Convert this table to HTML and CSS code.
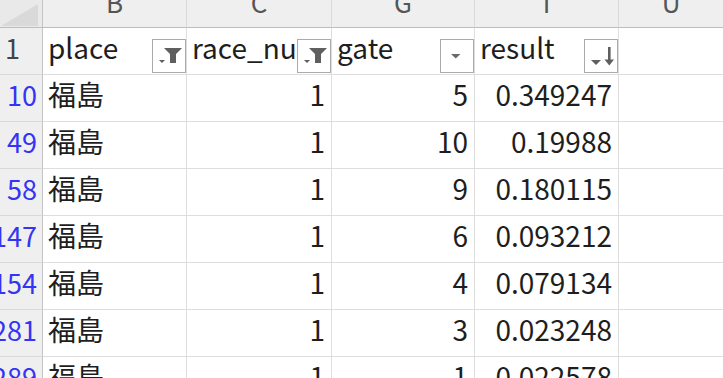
FILE: index.html
```html
<!DOCTYPE html>
<html lang="ja">
<head>
<meta charset="utf-8">
<title>Sheet</title>
<link rel="stylesheet" href="styles.css">
</head>
<body>
<div class="sheet">
  <div class="corner"><svg class="corner-tri" width="40" height="24" viewBox="0 0 40 24"><polygon points="1,23 38,1 38,23" fill="#d9d9d9"/></svg></div>
  <div class="colhead"><span>B</span></div>
  <div class="colhead"><span>C</span></div>
  <div class="colhead"><span>G</span></div>
  <div class="colhead"><span>I</span></div>
  <div class="colhead colhead-last"><span>U</span></div>

  <div class="rowhead rowhead-plain"><span>1</span></div>
  <div class="cell head"><span class="txt">place</span>
    <span class="fbtn"><svg width="32" height="32" viewBox="0 0 32 32"><polygon points="11,8 29,8 23,14 23,23 17,23 17,14" fill="#5f5f5f"/><polygon points="6,20 12,20 9,23" fill="#5f5f5f"/></svg></span></div>
  <div class="cell head"><span class="txt">race_num</span>
    <span class="fbtn"><svg width="32" height="32" viewBox="0 0 32 32"><polygon points="11,8 29,8 23,14 23,23 17,23 17,14" fill="#5f5f5f"/><polygon points="6,20 12,20 9,23" fill="#5f5f5f"/></svg></span></div>
  <div class="cell head"><span class="txt">gate</span>
    <span class="fbtn"><svg width="32" height="32" viewBox="0 0 32 32"><polygon points="10,14 19.5,14 14.75,18.5" fill="#6a6a6a"/></svg></span></div>
  <div class="cell head"><span class="txt">result</span>
    <span class="fbtn"><svg width="32" height="32" viewBox="0 0 32 32"><polygon points="6,20 16,20 11,25" fill="#5f5f5f"/><rect x="23" y="7" width="2.6" height="15" fill="#5f5f5f"/><polygon points="19.5,19.5 29,19.5 24.3,25.5" fill="#5f5f5f"/></svg></span></div>
  <div class="cell last"></div>

  <div class="rowhead"><span>10</span></div>
  <div class="cell"><span class="txt">福島</span></div>
  <div class="cell num"><span class="txt">1</span></div>
  <div class="cell num"><span class="txt">5</span></div>
  <div class="cell num"><span class="txt">0.349247</span></div>
  <div class="cell last"></div>

  <div class="rowhead"><span>49</span></div>
  <div class="cell"><span class="txt">福島</span></div>
  <div class="cell num"><span class="txt">1</span></div>
  <div class="cell num"><span class="txt">10</span></div>
  <div class="cell num"><span class="txt">0.19988</span></div>
  <div class="cell last"></div>

  <div class="rowhead"><span>58</span></div>
  <div class="cell"><span class="txt">福島</span></div>
  <div class="cell num"><span class="txt">1</span></div>
  <div class="cell num"><span class="txt">9</span></div>
  <div class="cell num"><span class="txt">0.180115</span></div>
  <div class="cell last"></div>

  <div class="rowhead"><span>147</span></div>
  <div class="cell"><span class="txt">福島</span></div>
  <div class="cell num"><span class="txt">1</span></div>
  <div class="cell num"><span class="txt">6</span></div>
  <div class="cell num"><span class="txt">0.093212</span></div>
  <div class="cell last"></div>

  <div class="rowhead"><span>154</span></div>
  <div class="cell"><span class="txt">福島</span></div>
  <div class="cell num"><span class="txt">1</span></div>
  <div class="cell num"><span class="txt">4</span></div>
  <div class="cell num"><span class="txt">0.079134</span></div>
  <div class="cell last"></div>

  <div class="rowhead"><span>281</span></div>
  <div class="cell"><span class="txt">福島</span></div>
  <div class="cell num"><span class="txt">1</span></div>
  <div class="cell num"><span class="txt">3</span></div>
  <div class="cell num"><span class="txt">0.023248</span></div>
  <div class="cell last"></div>

  <div class="rowhead"><span>289</span></div>
  <div class="cell"><span class="txt">福島</span></div>
  <div class="cell num"><span class="txt">1</span></div>
  <div class="cell num"><span class="txt">1</span></div>
  <div class="cell num"><span class="txt">0.022578</span></div>
  <div class="cell last"></div>
</div>
</body>
</html>
```
FILE: styles.css
```css
html, body {
  margin: 0;
  padding: 0;
  background: #ffffff;
  overflow: hidden;
}
body {
  width: 723px;
  height: 378px;
  font-family: "Noto Sans CJK JP", "Noto Sans", sans-serif;
}
.sheet {
  display: grid;
  grid-template-columns: 43px 144px 145px 143px 144px 1fr;
  grid-template-rows: 28px 47px repeat(7, 47px);
  width: 723px;
}
.corner {
  background: #e9e9e9;
  border-right: 1px solid #c4c4c4;
  border-bottom: 1px solid #bdbdbd;
  box-sizing: border-box;
  display: flex;
  align-items: flex-end;
  justify-content: flex-end;
  overflow: hidden;
}
.corner-tri {
  display: block;
  margin-right: 2px;
}
.colhead {
  background: #efefef;
  border-right: 1px solid #d9d9d9;
  border-bottom: 1px solid #bdbdbd;
  box-sizing: border-box;
  overflow: hidden;
  text-align: center;
  color: #555555;
  font-size: 26px;
  line-height: 26px;
}
.colhead span {
  display: block;
  margin-top: -11px;
}
.colhead-last {
  border-right: none;
}
.rowhead {
  background: #efefef;
  border-right: 1px solid #c4c4c4;
  border-bottom: 1px solid #d9d9d9;
  box-sizing: border-box;
  display: flex;
  align-items: flex-end;
  justify-content: flex-end;
  padding: 0 5px 13px 0;
  color: #3434f4;
  font-size: 27px;
  line-height: 26px;
  white-space: nowrap;
}
.rowhead-plain {
  color: #444444;
  padding-right: 22px;
}
.cell {
  position: relative;
  border-right: 1px solid #dedede;
  border-bottom: 1px solid #dedede;
  box-sizing: border-box;
  display: flex;
  align-items: flex-end;
  padding: 0 6px 13px 5px;
  color: #1e1e1e;
  font-size: 28px;
  line-height: 27px;
  white-space: nowrap;
  overflow: hidden;
}
.cell.num {
  justify-content: flex-end;
}
.cell.last {
  border-right: none;
}
.fbtn {
  position: absolute;
  right: 0;
  bottom: 1px;
  width: 34px;
  height: 34px;
  box-sizing: border-box;
  border: 1px solid #ababab;
  background: #ffffff;
  display: flex;
  align-items: center;
  justify-content: center;
}
.fbtn svg {
  display: block;
}
```
